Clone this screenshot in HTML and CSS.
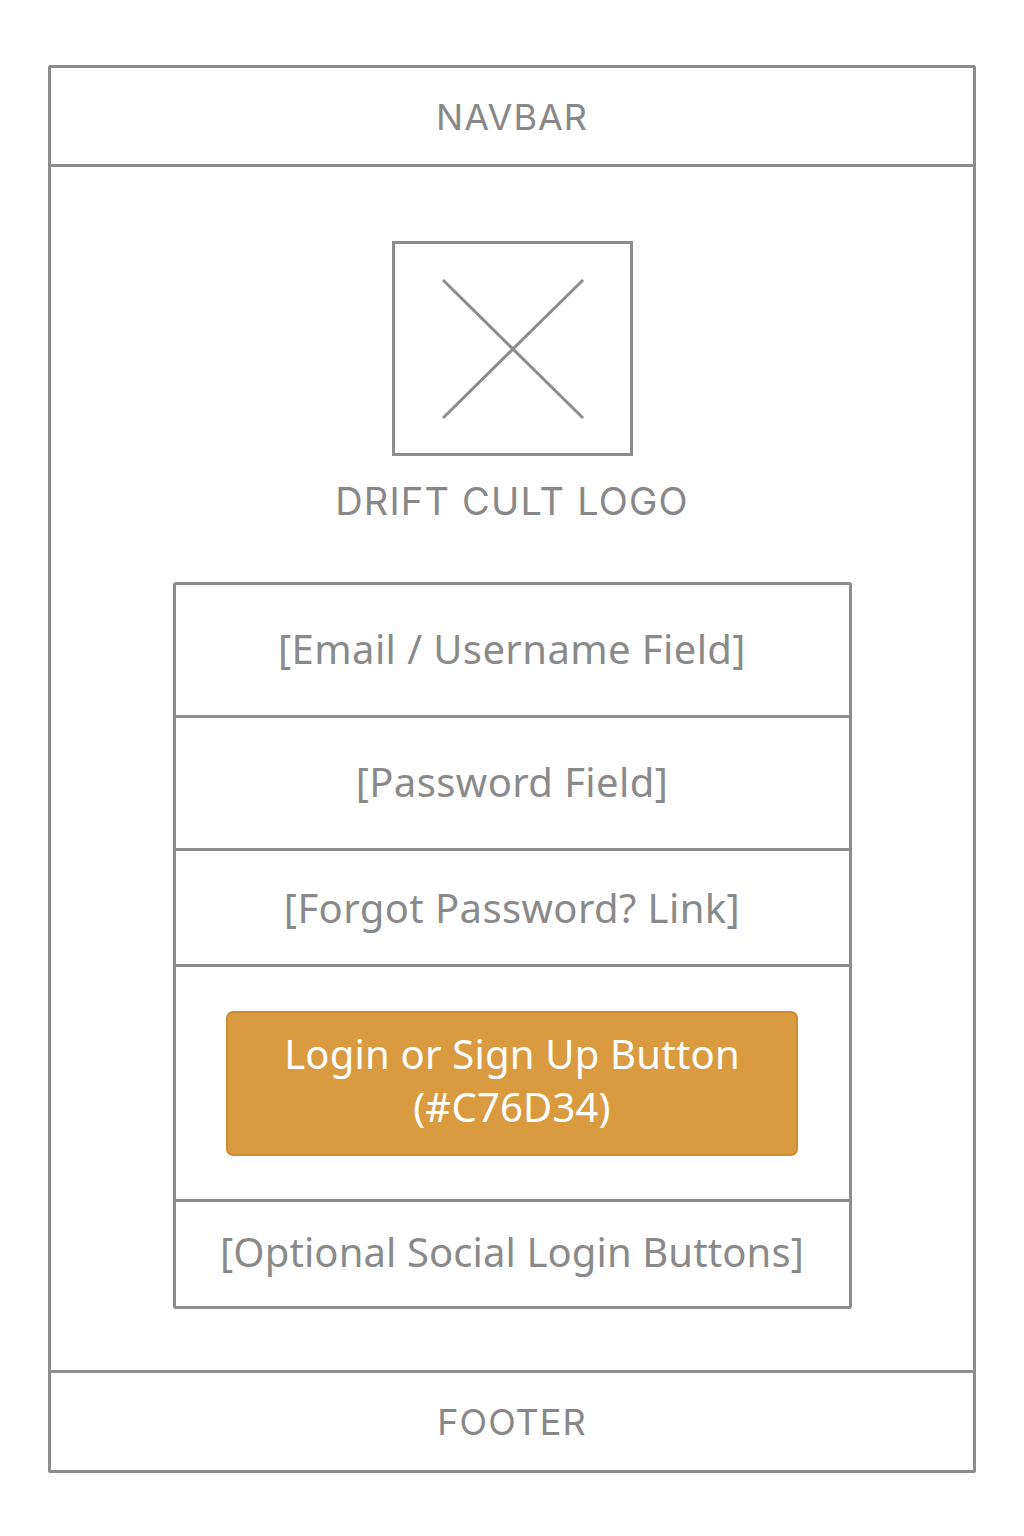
FILE: index.html
```html
<!DOCTYPE html>
<html>
<head>
<meta charset="utf-8">
<link rel="stylesheet" href="styles.css">
</head>
<body>
<div class="frame">
  <header class="navbar">NAVBAR</header>
  <main class="main">
    <div class="logo-box">
      <svg width="234" height="209" viewBox="0 0 234 209">
        <line x1="48" y1="36" x2="188" y2="174" stroke="#8c8c8c" stroke-width="3"/>
        <line x1="188" y1="36" x2="48" y2="174" stroke="#8c8c8c" stroke-width="3"/>
      </svg>
    </div>
    <div class="logo-label">DRIFT CULT LOGO</div>
    <div class="form">
      <div class="row row-email">[Email / Username Field]</div>
      <div class="row row-pass">[Password Field]</div>
      <div class="row row-forgot">[Forgot Password? Link]</div>
      <div class="row row-btn">
        <div class="btn">Login or Sign Up Button<br>(#C76D34)</div>
      </div>
      <div class="row row-social">[Optional Social Login Buttons]</div>
    </div>
  </main>
  <footer class="footer">FOOTER</footer>
</div>
</body>
</html>
```
FILE: styles.css
```css
html, body {
  margin: 0;
  padding: 0;
  background: #ffffff;
}
body {
  padding-top: 65px;
  padding-left: 48px;
}
.frame {
  width: 928px;
  box-sizing: border-box;
  border: 3px solid #8c8c8c;
  border-radius: 2px;
  display: flex;
  flex-direction: column;
}
.navbar {
  height: 99px;
  border-bottom: 3px solid #8c8c8c;
  display: flex;
  align-items: center;
  justify-content: center;
  font-family: "Inter", "Liberation Sans", sans-serif;
  font-size: 36px;
  color: #888888;
  letter-spacing: 1px;
  padding-top: 2px;
  box-sizing: border-box;
}
.main {
  height: 1203px;
  box-sizing: border-box;
  padding-top: 74px;
  display: flex;
  flex-direction: column;
  align-items: center;
}
.logo-box {
  width: 241px;
  height: 215px;
  box-sizing: border-box;
  border: 3px solid #8c8c8c;
  display: flex;
}
.logo-label {
  margin-top: 22px;
  font-family: "Inter", "Liberation Sans", sans-serif;
  font-size: 38px;
  line-height: 46px;
  letter-spacing: 1.2px;
  color: #888888;
}
.form {
  margin-top: 58px;
  width: 679px;
  box-sizing: border-box;
  border: 3px solid #8c8c8c;
  border-radius: 3px;
  display: flex;
  flex-direction: column;
}
.row {
  display: flex;
  align-items: center;
  justify-content: center;
  font-family: "Noto Sans", "Open Sans", sans-serif;
  font-size: 40px;
  letter-spacing: 0.4px;
  color: #8a8a8a;
  border-bottom: 3px solid #8c8c8c;
  box-sizing: border-box;
}
.row-email { height: 133px; padding-bottom: 4px; }
.row-pass { height: 133px; padding-bottom: 4px; }
.row-forgot { height: 116px; }
.row-btn { height: 235px; }
.row-social { height: 104px; border-bottom: none; padding-bottom: 6px; letter-spacing: 0.1px; }
.btn {
  width: 572px;
  height: 145px;
  box-sizing: border-box;
  background: #d99a40;
  border: 2px solid #cf8c32;
  border-radius: 7px;
  color: #ffffff;
  text-align: center;
  display: flex;
  align-items: center;
  justify-content: center;
  line-height: 53px;
  font-size: 40px;
  letter-spacing: 0.2px;
  padding-bottom: 6px;
}
.footer {
  height: 97px;
  border-top: 3px solid #8c8c8c;
  display: flex;
  align-items: center;
  justify-content: center;
  font-family: "Inter", "Liberation Sans", sans-serif;
  font-size: 36px;
  color: #888888;
  letter-spacing: 1px;
}
```
